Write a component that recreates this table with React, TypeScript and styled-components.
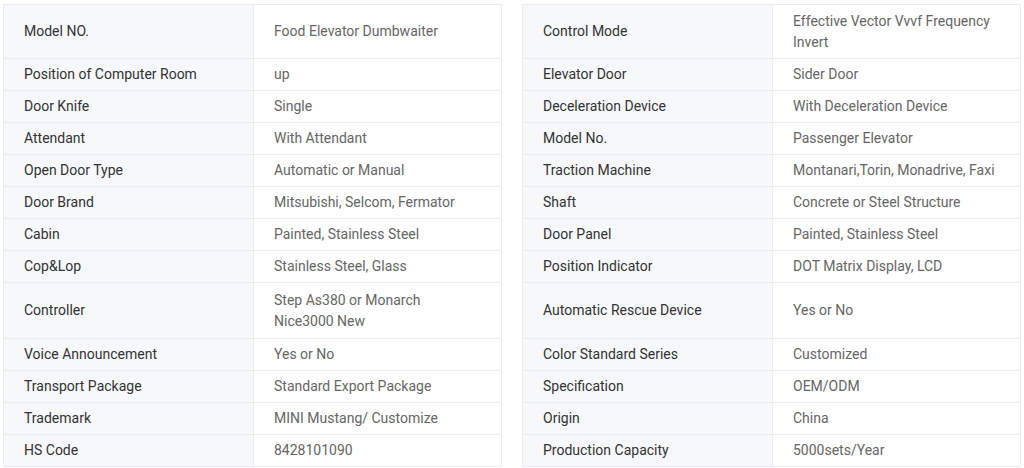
import styled, { createGlobalStyle } from 'styled-components';

const GlobalStyle = createGlobalStyle`
    html, body {
        margin: 0;
        padding: 0;
        background: #fff;
        font-family: Roboto, "Liberation Sans", Arial, sans-serif;
    }
`;

// rows at the same index share one height across both tables
const rowHeights: Record<number, number> = { 0: 54, 8: 56 };

const leftRows: [string, string][] = [
    ['Model NO.', 'Food Elevator Dumbwaiter'],
    ['Position of Computer Room', 'up'],
    ['Door Knife', 'Single'],
    ['Attendant', 'With Attendant'],
    ['Open Door Type', 'Automatic or Manual'],
    ['Door Brand', 'Mitsubishi, Selcom, Fermator'],
    ['Cabin', 'Painted, Stainless Steel'],
    ['Cop&Lop', 'Stainless Steel, Glass'],
    ['Controller', 'Step As380 or Monarch Nice3000 New'],
    ['Voice Announcement', 'Yes or No'],
    ['Transport Package', 'Standard Export Package'],
    ['Trademark', 'MINI Mustang/ Customize'],
    ['HS Code', '8428101090'],
];

const rightRows: [string, string][] = [
    ['Control Mode', 'Effective Vector Vvvf Frequency Invert'],
    ['Elevator Door', 'Sider Door'],
    ['Deceleration Device', 'With Deceleration Device'],
    ['Model No.', 'Passenger Elevator'],
    ['Traction Machine', 'Montanari,Torin, Monadrive, Faxi'],
    ['Shaft', 'Concrete or Steel Structure'],
    ['Door Panel', 'Painted, Stainless Steel'],
    ['Position Indicator', 'DOT Matrix Display, LCD'],
    ['Automatic Rescue Device', 'Yes or No'],
    ['Color Standard Series', 'Customized'],
    ['Specification', 'OEM/ODM'],
    ['Origin', 'China'],
    ['Production Capacity', '5000sets/Year'],
];

const Page = styled.div`
    display: flex;
    gap: 20px;
    padding: 4px 3px;
    width: 1024px;
    box-sizing: border-box;
`;

const SpecTable = styled.table`
    width: 499px;
    border-collapse: collapse;
    table-layout: fixed;
    font-size: 14px;
    line-height: 21px;
`;

const Row = styled.tr<{ $height: number }>`
    height: ${({ $height }) => $height}px;
`;

const LabelCell = styled.td`
    width: 250px;
    box-sizing: border-box;
    background: #f7f8fb;
    color: #333;
    padding: 5px 20px;
    border: 1px solid #e9edf3;
    vertical-align: middle;
`;

const ValueCell = styled.td`
    background: #fff;
    color: #666;
    padding: 5px 20px;
    border: 1px solid #e9edf3;
    vertical-align: middle;
`;

function Table({ rows }: { rows: [string, string][] }) {
    return (
        <SpecTable>
            <tbody>
                {rows.map(([label, value], i) => (
                    <Row key={label} $height={rowHeights[i] ?? 32}>
                        <LabelCell>{label}</LabelCell>
                        <ValueCell>{value}</ValueCell>
                    </Row>
                ))}
            </tbody>
        </SpecTable>
    );
}

export default function App() {
    return (
        <>
            <GlobalStyle />
            <Page>
                <Table rows={leftRows} />
                <Table rows={rightRows} />
            </Page>
        </>
    );
}
